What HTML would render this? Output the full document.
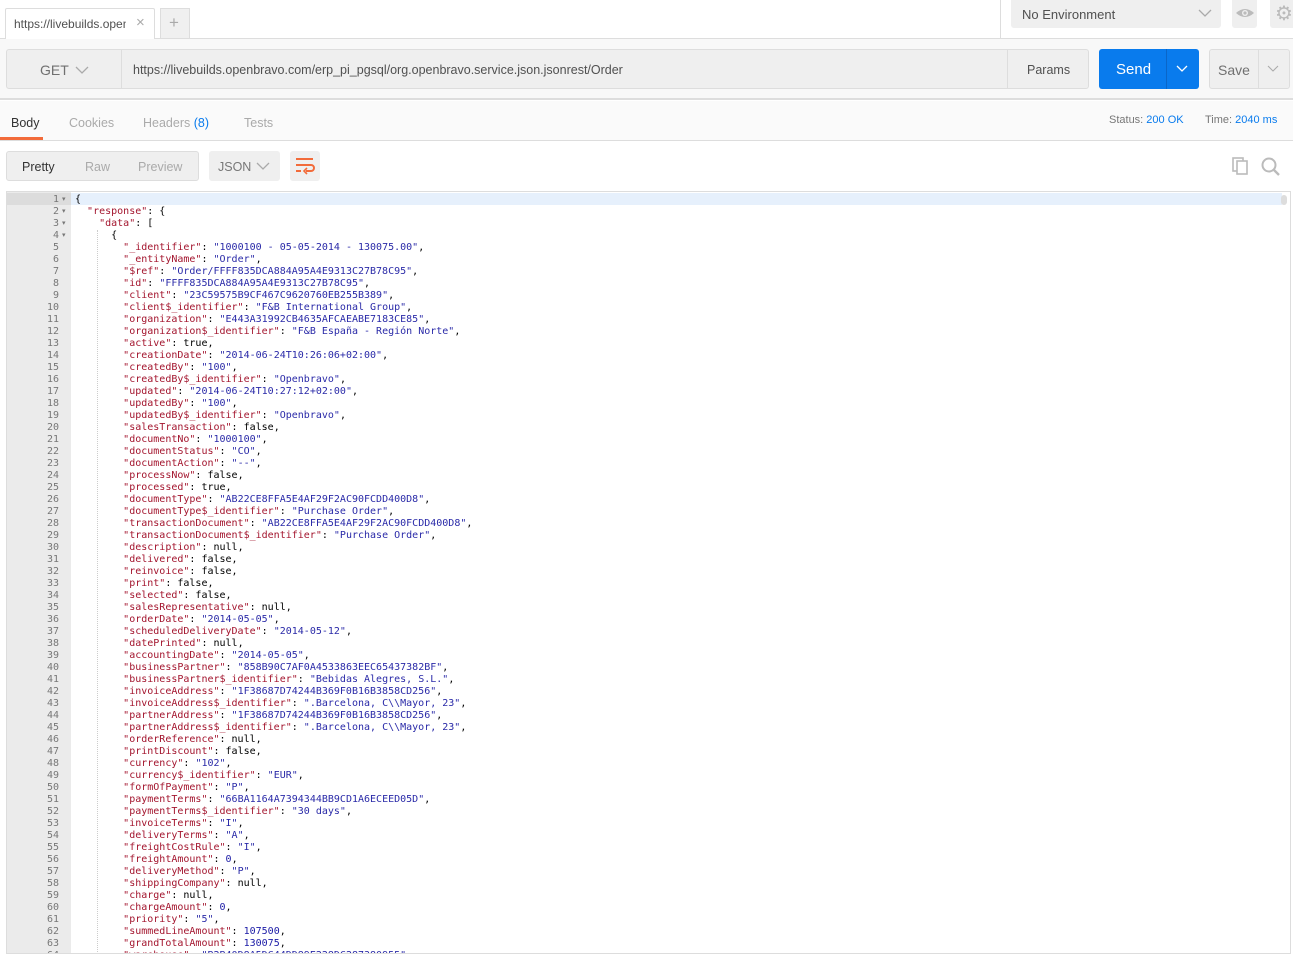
<!DOCTYPE html>
<html><head><meta charset="utf-8"><style>
*{box-sizing:border-box;margin:0;padding:0}
body{width:1293px;height:957px;overflow:hidden;background:#fff;font-family:"Liberation Sans",sans-serif;position:relative;color:#505050}
.a{position:absolute}
.code{font-family:"DejaVu Sans Mono","Liberation Mono",monospace;font-size:10px;line-height:12px;white-space:pre;color:#000}
.k{color:#a3152e}.s{color:#2a2aa8}.n{color:#1a1aa6}
.ln{font-family:"DejaVu Sans Mono","Liberation Mono",monospace;font-size:10px;line-height:12px;color:#777;text-align:right;width:52px}
</style></head><body>
<!-- top bar -->
<div class="a" style="left:0;top:38px;width:1293px;height:1px;background:#ddd"></div>
<div class="a" style="left:5px;top:8px;height:31px;background:#fff;border:1px solid #ddd;border-bottom:none;border-radius:2px 2px 0 0;width:150px"></div>
<div class="a" style="left:14px;top:17px;font-size:12px;color:#505050;width:112px;overflow:hidden;white-space:nowrap">https://livebuilds.openbravo</div>
<div class="a" style="left:136px;top:14px;font-size:15px;color:#aaa">×</div>
<div class="a" style="left:160px;top:8px;width:30px;height:30px;background:#f0f0f0;border:1px solid #ddd;border-bottom:none"></div>
<div class="a" style="left:169px;top:13px;font-size:17px;color:#aaa">+</div>
<div class="a" style="left:1000px;top:0;width:1px;height:38px;background:#ddd"></div>
<div class="a" style="left:1011px;top:0;width:210px;height:28px;background:#efefef;border-radius:0 0 3px 3px"></div>
<div class="a" style="left:1022px;top:7px;font-size:13px;color:#505050">No Environment</div>
<svg class="a" style="left:1198px;top:8px" width="14" height="10"><path d="M1 2l6 6 6-6" fill="none" stroke="#aaa" stroke-width="1.3"/></svg>
<div class="a" style="left:1232px;top:0;width:25px;height:28px;background:#efefef;border-radius:0 0 3px 3px"></div>
<svg class="a" style="left:1235px;top:6px" width="20" height="14"><path d="M1 7Q10-1 19 7Q10 15 1 7Z" fill="#bbb"/><circle cx="10" cy="7" r="3" fill="#efefef"/><circle cx="10" cy="7" r="1.6" fill="#bbb"/></svg>
<div class="a" style="left:1270px;top:0;width:30px;height:28px;background:#efefef;border-radius:0 0 3px 3px"></div>
<div class="a" style="left:1275px;top:1px;font-size:20px;color:#bbb">⚙</div>
<!-- request bar -->
<div class="a" style="left:0;top:39px;width:1293px;height:61px;background:#f8f8f8;border-bottom:2px solid #ddd"></div>
<div class="a" style="left:6px;top:49px;width:1083px;height:40px;background:#efefef;border:1px solid #ddd;border-radius:3px"></div>
<div class="a" style="left:121px;top:50px;width:1px;height:38px;background:#ddd"></div>
<div class="a" style="left:1007px;top:50px;width:1px;height:38px;background:#ddd"></div>
<div class="a" style="left:40px;top:62px;font-size:14px;color:#707070">GET</div>
<svg class="a" style="left:75px;top:65px" width="14" height="10"><path d="M1 2l6 6 6-6" fill="none" stroke="#aaa" stroke-width="1.3"/></svg>
<div class="a" style="left:133px;top:63px;font-size:12.5px;color:#505050">https://livebuilds.openbravo.com/erp_pi_pgsql/org.openbravo.service.json.jsonrest/Order</div>
<div class="a" style="left:1027px;top:63px;font-size:12.5px;color:#505050">Params</div>
<div class="a" style="left:1099px;top:49px;width:100px;height:40px;background:#097bed;border-radius:3px"></div>
<div class="a" style="left:1166px;top:49px;width:1px;height:40px;background:#0a66c8"></div>
<div class="a" style="left:1116px;top:61px;font-size:15px;color:#fff">Send</div>
<svg class="a" style="left:1176px;top:65px" width="12" height="8"><path d="M1 1l5 5 5-5" fill="none" stroke="#fff" stroke-width="1.3"/></svg>
<div class="a" style="left:1209px;top:49px;width:81px;height:40px;background:#efefef;border:1px solid #ddd;border-radius:3px"></div>
<div class="a" style="left:1258px;top:50px;width:1px;height:38px;background:#ddd"></div>
<div class="a" style="left:1218px;top:62px;font-size:14px;color:#707070">Save</div>
<svg class="a" style="left:1267px;top:65px" width="12" height="8"><path d="M1 1l5 5 5-5" fill="none" stroke="#aaa" stroke-width="1.1"/></svg>
<!-- response tabs -->
<div class="a" style="left:0;top:101px;width:1293px;height:40px;background:#fafafa;border-bottom:1px solid #ddd"></div>
<div class="a" style="left:11px;top:116px;font-size:12.5px;color:#333">Body</div>
<div class="a" style="left:0;top:137px;width:43px;height:3px;background:#f26b3a"></div>
<div class="a" style="left:69px;top:116px;font-size:12.5px;color:#aaa">Cookies</div>
<div class="a" style="left:143px;top:116px;font-size:12.5px;color:#aaa">Headers <span style="color:#097bed">(8)</span></div>
<div class="a" style="left:244px;top:116px;font-size:12.5px;color:#aaa">Tests</div>
<div class="a" style="left:1109px;top:114px;font-size:11px;color:#777">Status: <span style="color:#097bed">200 OK</span></div>
<div class="a" style="left:1205px;top:114px;font-size:11px;color:#777">Time: <span style="color:#097bed">2040 ms</span></div>
<!-- toolbar -->
<div class="a" style="left:6px;top:151px;width:193px;height:30px;background:#efefef;border:1px solid #ddd;border-radius:3px"></div>
<div class="a" style="left:22px;top:160px;font-size:12.5px;color:#333">Pretty</div>
<div class="a" style="left:85px;top:160px;font-size:12.5px;color:#aaa">Raw</div>
<div class="a" style="left:138px;top:160px;font-size:12.5px;color:#aaa">Preview</div>
<div class="a" style="left:209px;top:151px;width:71px;height:30px;background:#efefef;border-radius:3px"></div>
<div class="a" style="left:218px;top:160px;font-size:12.5px;color:#777">JSON</div>
<svg class="a" style="left:256px;top:161px" width="14" height="10"><path d="M1 2l6 6 6-6" fill="none" stroke="#aaa" stroke-width="1.3"/></svg>
<div class="a" style="left:290px;top:151px;width:30px;height:30px;background:#efefef;border-radius:3px"></div>
<svg class="a" style="left:294px;top:157px" width="22" height="18"><path d="M2 2h17M2 8h15a3 3 0 0 1 0 6h-5M2 14h5" fill="none" stroke="#f26b3a" stroke-width="2"/><path d="M13 11l-3 3 3 3" fill="none" stroke="#f26b3a" stroke-width="1.6"/></svg>
<svg class="a" style="left:1231px;top:156px" width="20" height="20"><rect x="2" y="2" width="10" height="13" fill="none" stroke="#bbb" stroke-width="1.6"/><rect x="6" y="5" width="10" height="13" fill="#fff" stroke="#bbb" stroke-width="1.6"/></svg>
<svg class="a" style="left:1260px;top:156px" width="22" height="22"><circle cx="9" cy="9" r="6.5" fill="none" stroke="#bbb" stroke-width="2"/><path d="M14 14l5 5" stroke="#bbb" stroke-width="2.4"/></svg>
<!-- editor -->
<div class="a" style="left:6px;top:191px;width:1285px;height:763px;border:1px solid #ddd;overflow:hidden">
<div class="a" style="left:0;top:0;width:64px;height:763px;background:#ebebeb"></div>
<div class="a" style="left:0;top:1px;width:1275px;height:12px;background:#e6f0fc"></div>
<div class="a" style="left:0;top:1px;width:64px;height:12px;background:#dcdcdc"></div>
<div class="a" style="left:1274px;top:3px;width:6px;height:10px;background:#ddd;border-radius:3px"></div>
<div class="a" style="left:90px;top:38px;width:1px;height:726px;border-left:1px dotted #ccc"></div>
<div class="a ln" style="left:0;top:2px" id="ln"></div>
<div class="a" style="left:55px;top:2px;font-size:7px;line-height:12px;color:#777">▾<br>▾<br>▾<br>▾</div>
<div class="a code" style="left:68px;top:2px">{
  <span class="k">"response"</span>: {
    <span class="k">"data"</span>: [
      {
        <span class="k">"_identifier"</span>: <span class="s">"1000100 - 05-05-2014 - 130075.00"</span>,
        <span class="k">"_entityName"</span>: <span class="s">"Order"</span>,
        <span class="k">"$ref"</span>: <span class="s">"Order/FFFF835DCA884A95A4E9313C27B78C95"</span>,
        <span class="k">"id"</span>: <span class="s">"FFFF835DCA884A95A4E9313C27B78C95"</span>,
        <span class="k">"client"</span>: <span class="s">"23C59575B9CF467C9620760EB255B389"</span>,
        <span class="k">"client$_identifier"</span>: <span class="s">"F&amp;B International Group"</span>,
        <span class="k">"organization"</span>: <span class="s">"E443A31992CB4635AFCAEABE7183CE85"</span>,
        <span class="k">"organization$_identifier"</span>: <span class="s">"F&amp;B España - Región Norte"</span>,
        <span class="k">"active"</span>: true,
        <span class="k">"creationDate"</span>: <span class="s">"2014-06-24T10:26:06+02:00"</span>,
        <span class="k">"createdBy"</span>: <span class="s">"100"</span>,
        <span class="k">"createdBy$_identifier"</span>: <span class="s">"Openbravo"</span>,
        <span class="k">"updated"</span>: <span class="s">"2014-06-24T10:27:12+02:00"</span>,
        <span class="k">"updatedBy"</span>: <span class="s">"100"</span>,
        <span class="k">"updatedBy$_identifier"</span>: <span class="s">"Openbravo"</span>,
        <span class="k">"salesTransaction"</span>: false,
        <span class="k">"documentNo"</span>: <span class="s">"1000100"</span>,
        <span class="k">"documentStatus"</span>: <span class="s">"CO"</span>,
        <span class="k">"documentAction"</span>: <span class="s">"--"</span>,
        <span class="k">"processNow"</span>: false,
        <span class="k">"processed"</span>: true,
        <span class="k">"documentType"</span>: <span class="s">"AB22CE8FFA5E4AF29F2AC90FCDD400D8"</span>,
        <span class="k">"documentType$_identifier"</span>: <span class="s">"Purchase Order"</span>,
        <span class="k">"transactionDocument"</span>: <span class="s">"AB22CE8FFA5E4AF29F2AC90FCDD400D8"</span>,
        <span class="k">"transactionDocument$_identifier"</span>: <span class="s">"Purchase Order"</span>,
        <span class="k">"description"</span>: null,
        <span class="k">"delivered"</span>: false,
        <span class="k">"reinvoice"</span>: false,
        <span class="k">"print"</span>: false,
        <span class="k">"selected"</span>: false,
        <span class="k">"salesRepresentative"</span>: null,
        <span class="k">"orderDate"</span>: <span class="s">"2014-05-05"</span>,
        <span class="k">"scheduledDeliveryDate"</span>: <span class="s">"2014-05-12"</span>,
        <span class="k">"datePrinted"</span>: null,
        <span class="k">"accountingDate"</span>: <span class="s">"2014-05-05"</span>,
        <span class="k">"businessPartner"</span>: <span class="s">"858B90C7AF0A4533863EEC65437382BF"</span>,
        <span class="k">"businessPartner$_identifier"</span>: <span class="s">"Bebidas Alegres, S.L."</span>,
        <span class="k">"invoiceAddress"</span>: <span class="s">"1F38687D74244B369F0B16B3858CD256"</span>,
        <span class="k">"invoiceAddress$_identifier"</span>: <span class="s">".Barcelona, C\\Mayor, 23"</span>,
        <span class="k">"partnerAddress"</span>: <span class="s">"1F38687D74244B369F0B16B3858CD256"</span>,
        <span class="k">"partnerAddress$_identifier"</span>: <span class="s">".Barcelona, C\\Mayor, 23"</span>,
        <span class="k">"orderReference"</span>: null,
        <span class="k">"printDiscount"</span>: false,
        <span class="k">"currency"</span>: <span class="s">"102"</span>,
        <span class="k">"currency$_identifier"</span>: <span class="s">"EUR"</span>,
        <span class="k">"formOfPayment"</span>: <span class="s">"P"</span>,
        <span class="k">"paymentTerms"</span>: <span class="s">"66BA1164A7394344BB9CD1A6ECEED05D"</span>,
        <span class="k">"paymentTerms$_identifier"</span>: <span class="s">"30 days"</span>,
        <span class="k">"invoiceTerms"</span>: <span class="s">"I"</span>,
        <span class="k">"deliveryTerms"</span>: <span class="s">"A"</span>,
        <span class="k">"freightCostRule"</span>: <span class="s">"I"</span>,
        <span class="k">"freightAmount"</span>: <span class="n">0</span>,
        <span class="k">"deliveryMethod"</span>: <span class="s">"P"</span>,
        <span class="k">"shippingCompany"</span>: null,
        <span class="k">"charge"</span>: null,
        <span class="k">"chargeAmount"</span>: <span class="n">0</span>,
        <span class="k">"priority"</span>: <span class="s">"5"</span>,
        <span class="k">"summedLineAmount"</span>: <span class="n">107500</span>,
        <span class="k">"grandTotalAmount"</span>: <span class="n">130075</span>,
        <span class="k">"warehouse"</span>: <span class="s">"B2B40D8A5DC44DD89E228DC287380955"</span>,</div>
</div>
<script>
var s="";for(var i=1;i<=64;i++)s+=i+"<br>";document.getElementById("ln").innerHTML=s;
</script>
</body></html>
